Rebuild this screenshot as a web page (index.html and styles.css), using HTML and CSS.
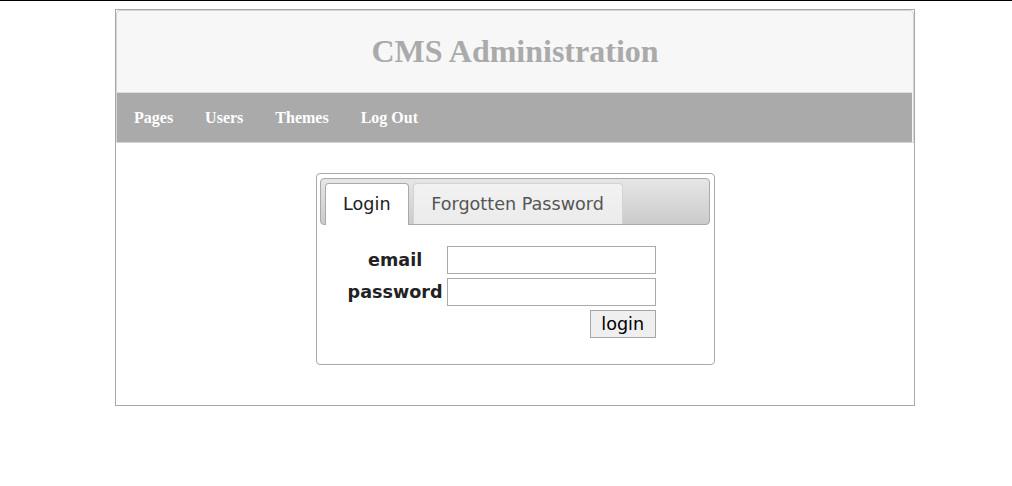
FILE: index.html
```html
<!DOCTYPE html>
<html>
<head>
<meta charset="utf-8">
<title>CMS Administration</title>
<link rel="stylesheet" href="styles.css">
</head>
<body>
<div class="page">
  <div class="header">
    <h1 class="title">CMS Administration</h1>
    <nav class="menu">
      <a href="#">Pages</a>
      <a href="#">Users</a>
      <a href="#">Themes</a>
      <a href="#">Log Out</a>
    </nav>
  </div>
  <div class="main">
    <div class="tabs">
      <ul class="tab-nav">
        <li class="tab active"><a href="#">Login</a></li>
        <li class="tab"><a href="#">Forgotten Password</a></li>
      </ul>
      <div class="panel">
        <table class="form">
          <tr>
            <td class="label">email</td>
            <td><input class="field" type="text"></td>
          </tr>
          <tr>
            <td class="label">password</td>
            <td><input class="field" type="password"></td>
          </tr>
          <tr>
            <td></td>
            <td class="actions"><button class="btn" type="button">login</button></td>
          </tr>
        </table>
      </div>
    </div>
  </div>
</div>
</body>
</html>
```
FILE: styles.css
```css
html {
  border-top: 1px solid #000;
  background: #fff;
}
body {
  margin: 8px;
  font-family: "Liberation Serif", "Times New Roman", serif;
}
.page {
  box-sizing: border-box;
  width: 800px;
  margin-left: 107px;
  border: 1px solid #a8a8a8;
  padding: 0;
}
.header {
  border: 1px solid #d4d4d4;
  border-radius: 4px 4px 0 0;
  background: #f7f7f7;
}
.title {
  margin: 0;
  height: 81px;
  line-height: 81px;
  text-align: center;
  font-family: "Liberation Serif", "Times New Roman", serif;
  font-size: 32px;
  font-weight: bold;
  color: #aaa;
}
.menu {
  display: flex;
  height: 49px;
  align-items: center;
  padding-left: 1px;
  background: #aaa;
  border-top: 1px solid #ddd;
  margin: 0 1px 0 0;
}
.menu a {
  padding: 0 16px;
  line-height: 49px;
  color: #fff;
  font-weight: bold;
  font-size: 16px;
  text-decoration: none;
  font-family: "Liberation Serif", "Times New Roman", serif;
}
.main {
  padding: 30px 0 40px;
}
.tabs {
  box-sizing: border-box;
  width: 399px;
  margin: 0 auto;
  border: 1px solid #aaa;
  border-radius: 4px;
  padding: 3.5px;
  font-family: "DejaVu Sans", Verdana, sans-serif;
  font-size: 17.6px;
  background: #fff;
}
.tab-nav {
  display: flex;
  list-style: none;
  margin: 0;
  padding: 3.5px 3.5px 0;
  border: 1px solid #aaa;
  border-radius: 4px;
  background: linear-gradient(#e6e6e6, #cbcbcb);
}
.tab {
  margin: 1px 3.5px 0 0;
  border: 1px solid #d3d3d3;
  border-bottom: 0;
  border-radius: 4px 4px 0 0;
  background: linear-gradient(#f2f2f2, #ebebeb);
}
.tab a {
  display: block;
  padding: 8.8px 17.6px;
  line-height: 22px;
  color: #555;
  text-decoration: none;
}
.tab.active {
  background: #fff;
  border-color: #aaa;
  margin-bottom: -1px;
  padding-bottom: 1px;
}
.tab.active a {
  color: #212121;
}
.panel {
  padding: 18.6px 24.6px 19.6px;
}
.form {
  border-spacing: 2px;
}
.form td {
  padding: 1px;
}
.label {
  text-align: center;
  font-weight: bold;
  color: #222;
}
.field {
  box-sizing: border-box;
  display: block;
  width: 209px;
  height: 28px;
  margin: 0;
  padding: 1px 2px;
  border: 1px solid #aaa;
  font-family: "DejaVu Sans", Verdana, sans-serif;
  font-size: 15px;
}
.actions {
  text-align: right;
}
.btn {
  box-sizing: border-box;
  height: 28px;
  margin: 0;
  padding: 0 10.5px;
  border: 1px solid #a6a6a6;
  background: #efefef;
  font-family: "DejaVu Sans", Verdana, sans-serif;
  font-size: 17.6px;
  color: #000;
  line-height: 24px;
}
```
